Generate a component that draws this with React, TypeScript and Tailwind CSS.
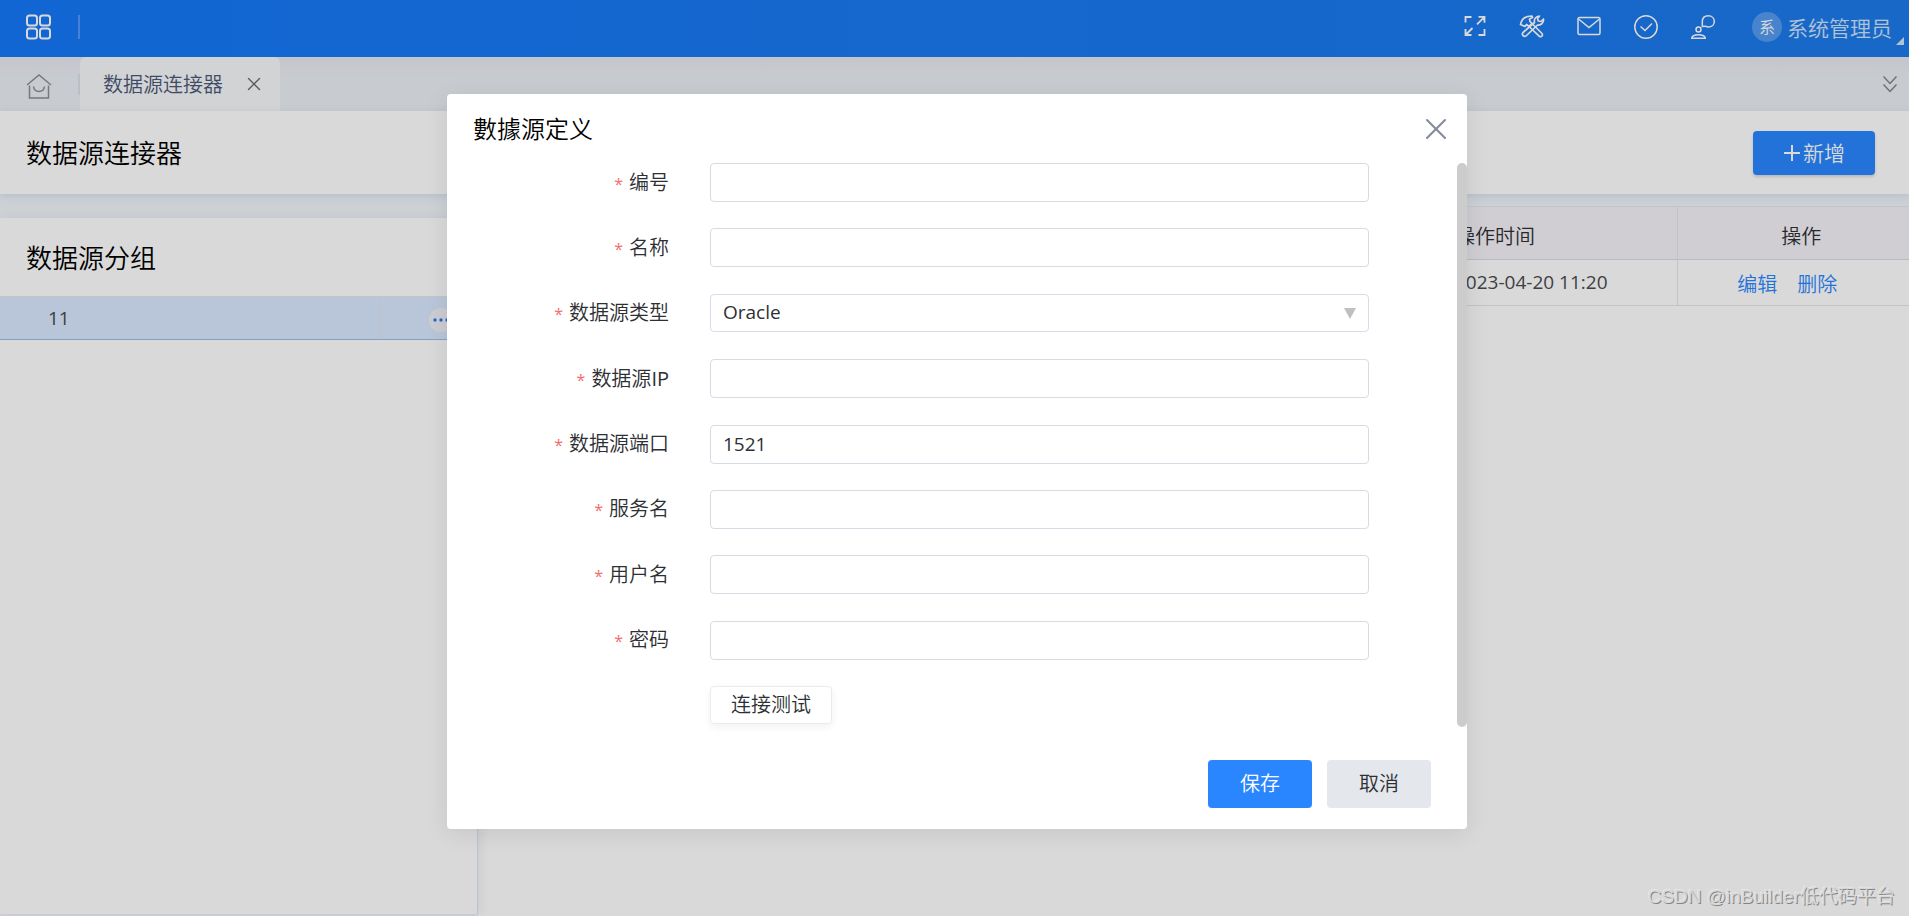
import { useState, type ReactNode } from "react";
import { X } from "lucide-react";

type Field = {
  id: string;
  label: ReactNode;
  value?: string;
  type?: string;
  options?: string[];
};

const fields: Field[] = [
  { id: "code", label: "编号" },
  { id: "name", label: "名称" },
  { id: "kind", label: "数据源类型", value: "Oracle", options: ["Oracle"] },
  { id: "ip", label: <>数据源<span className="font-normal">IP</span></> },
  { id: "port", label: "数据源端口", value: "1521" },
  { id: "service", label: "服务名" },
  { id: "user", label: "用户名" },
  { id: "password", label: "密码", type: "password" },
];

export default function App() {
  return (
    <div className="relative flex min-h-screen flex-col bg-[#f1f6fb] font-['Open_Sans','Noto_Sans_CJK_SC',sans-serif] text-xl font-[350] text-[#2d2f33]">
      <TopBar />
      <TabBar />
      <PageHeader />
      <main className="flex flex-1">
        <GroupPanel />
        <ConnectorTable />
      </main>
      <div className="absolute inset-0 flex items-start justify-center bg-black/15 pt-[94px] pl-[5px]">
        <SourceDialog />
      </div>
      <p className="absolute right-[14px] bottom-1 font-['Liberation_Sans','Noto_Sans_CJK_SC',sans-serif] text-[19px] leading-[30px] text-[#d8d8d8] [text-shadow:1px_1px_0_#858585,-1px_-1px_0_#e6e6e6]">
        CSDN @inBuilder低代码平台
      </p>
    </div>
  );
}

function IconButton({ label, children }: { label: string; children: ReactNode }) {
  return (
    <button type="button" aria-label={label} className="flex h-6 w-6 items-center justify-center">
      {children}
    </button>
  );
}

function TopBar() {
  return (
    <header className="flex h-[57px] items-center bg-linear-to-r from-[#1678f8] to-[#1d7bec] pr-[5px] pb-1 pl-[26px] text-white shadow-[0_2px_16px_rgba(120,80,80,0.15)]">
      <button type="button" aria-label="应用" className="mr-[26px]">
        <svg viewBox="0 0 26 26" className="h-[26px] w-[26px]" fill="none" stroke="currentColor" strokeWidth="2">
          <rect x="1" y="1.500" width="10" height="10" rx="2.500" />
          <rect x="14" y="1.500" width="10" height="10" rx="2.500" />
          <rect x="1" y="14.500" width="10" height="10" rx="2.500" />
          <rect x="14" y="14.500" width="10" height="10" rx="2.500" />
        </svg>
      </button>
      <span className="h-6 w-0.5 bg-white/25" />

      <div className="ml-auto flex items-center gap-[33px]">
        <IconButton label="全屏">
          <svg viewBox="0 0 24 24" className="h-6 w-6" fill="none" stroke="currentColor" strokeWidth="1.800">
            <path d="M2.500 7.500V2h6M15.500 1.800h6v6M21 2.300l-7 7M21.500 14v6h-6M8.500 20h-6v-6M3 19.500l6.500-6.500" />
          </svg>
        </IconButton>
        <IconButton label="工具">
          <svg viewBox="0 0 26 24" className="h-6 w-[26px] shrink-0" fill="none" stroke="currentColor" strokeWidth="1.700" strokeLinejoin="round">
            <path d="M1.500 9.500C2.500 4.500 5.500.8 13 1l.5 1.500-3 1.500.5 2.500 2 2-3 3-2.500-2-1.500 2z" />
            <path d="M10 11.500l3-3 10 10c1.500 2-.8 4-2.800 2.700z" />
            <path d="M4 17.500l11.500-10c-.7-3 1-6.500 5-6.500L18.500 3.500l.8 2.500 2.700.5L24.500 4c.4 4-2.500 6.500-6 6L7 21c-2.500 1-4.700-1.500-3-3.500z" />
          </svg>
        </IconButton>
        <IconButton label="消息">
          <svg viewBox="0 0 24 24" className="h-6 w-6" fill="none" stroke="currentColor" strokeWidth="1.500">
            <rect x="1" y="2.500" width="22" height="17" rx="1.500" />
            <path d="M1.500 4 12 12.500 22.500 4" />
          </svg>
        </IconButton>
        <IconButton label="待办">
          <svg viewBox="0 0 24 24" className="h-6 w-6" fill="none" stroke="currentColor" strokeWidth="1.500">
            <circle cx="12" cy="12" r="11.200" />
            <path d="m6.500 11.500 4.500 4 7-7" />
          </svg>
        </IconButton>
        <IconButton label="咨询">
          <svg viewBox="0 0 24 24" className="h-6 w-6" fill="none" stroke="currentColor" strokeWidth="1.500">
            <path d="M11.300 11.500V6.500C11.500 3 14 .8 17.300.8c3.500 0 6 2.500 6 5.700 0 3.300-2.500 5.500-6 5.500-1.500 0-2.200-.3-3-.8z" />
            <circle cx="7.500" cy="14.500" r="2.500" />
            <path d="M.8 23.200h13.400c-.3-2.400-3.200-3.500-6.700-3.500s-6.400 1.100-6.700 3.500z" />
          </svg>
        </IconButton>
        <button type="button" className="ml-1 flex items-center text-[21px] text-white/80">
          <span className="mr-[5px] flex h-[30px] w-[30px] items-center justify-center rounded-full bg-white/25 text-base text-white">
            系
          </span>
          <span className="pt-0.5 leading-[30px]">系统管理员</span>
          <svg viewBox="0 0 8 8" className="mt-7 ml-1 h-2 w-2" fill="currentColor">
            <path d="M8 0v8H0z" />
          </svg>
        </button>
      </div>
    </header>
  );
}

function TabBar() {
  return (
    <nav className="flex h-[54px] items-center bg-linear-to-b from-[#e8e8f0] to-[#ebf0f5] to-40%">
      <button type="button" aria-label="首页" className="ml-[26px] pt-1">
        <svg viewBox="0 0 26 26" className="h-[26px] w-[26px] text-[#8c8d90]" fill="none" stroke="currentColor" strokeWidth="1.500">
          <path d="M1 12 13 2l12 10M3.500 12.500V25h19V12.500M7.500 13.500c.8 6.500 10.200 6.500 11 0" />
        </svg>
      </button>
      <span className="ml-[26px] h-[21px] w-0.5 bg-[#dcdfea]" />
      <div className="flex h-full w-[200px] items-center rounded-t-md bg-[#f7f8fa] pl-[23px] text-[#4b5878]">
        <a href="#connector" className="pt-0.5">数据源连接器</a>
        <button type="button" aria-label="关闭标签" className="ml-5">
          <X className="h-[22px] w-[22px] text-[#6b6c70]" strokeWidth={1.5} />
        </button>
      </div>
      <button type="button" aria-label="更多标签" className="mr-[11px] ml-auto">
        <svg viewBox="0 0 16 18" className="h-[18px] w-4 text-[#85868a]" fill="none" stroke="currentColor" strokeWidth="1.500">
          <path d="m1.500 1.500 6.500 7 6.500-7M1.500 9.500l6.500 7 6.500-7" />
        </svg>
      </button>
    </nav>
  );
}

function PageHeader() {
  return (
    <div className="flex h-[83px] items-center justify-between bg-white pr-[34px] pl-[26px] shadow-[0_2px_8px_rgba(70,100,160,0.15)]">
      <h1 className="pt-0.5 text-[26px] text-black">数据源连接器</h1>
      <button
        type="button"
        className="flex h-11 w-[122px] items-center justify-center gap-0.5 rounded-sm bg-[#2a86ff] text-[21px] text-white shadow-[0_2px_3px_rgba(0,0,0,0.15)]"
      >
        <svg viewBox="0 0 18 18" className="h-[18px] w-[18px]" fill="none" stroke="currentColor" strokeWidth="2">
          <path d="M9 1v16M1 9h16" />
        </svg>
        <span className="pt-0.5">新增</span>
      </button>
    </div>
  );
}

function GroupPanel() {
  return (
    <section className="relative mt-6 mb-0.5 w-[478px] border-r border-[#dfe4ec] bg-white shadow-[4px_0_8px_rgba(70,100,150,0.08)]">
      <h2 className="flex h-[78px] items-center pt-0.5 pl-[26px] text-[26px] text-black">数据源分组</h2>
      <div className="flex h-11 items-center border-t border-b border-t-[#e6e8ee] border-b-[#9ebcec] bg-[#dae9ff] pl-12">
        <span className="flex-1 text-[19px] font-normal text-[#45484d]">11</span>
        <div className="flex h-full w-[97px] items-center border-l border-[#e2e4ea] pt-1 pl-12">
          <button type="button" aria-label="更多" className="flex h-6 w-6 items-center justify-center rounded-full bg-[#eff1f8]">
            <svg viewBox="0 0 16 4" className="h-1 w-4 text-[#2a7cf5]" fill="currentColor">
              <circle cx="2" cy="2" r="1.700" />
              <circle cx="8" cy="2" r="1.700" />
              <circle cx="14" cy="2" r="1.700" />
            </svg>
          </button>
        </div>
      </div>
    </section>
  );
}

function ConnectorTable() {
  return (
    <section className="mt-3 flex-1 bg-white">
      <table className="w-full table-fixed border-collapse text-left">
        <thead>
          <tr className="h-[53px] border-t border-b border-t-[#e4e8ee] border-b-[#dadce6] bg-[#f5f2f8]">
            <td />
            <th scope="col" className="w-[238px] pt-2 pl-4 font-[350]">操作时间</th>
            <th scope="col" className="w-[232px] border-l border-[#e4e6ec] pt-2 pl-4 text-center font-[350]">操作</th>
          </tr>
        </thead>
        <tbody>
          <tr className="h-[46px] border-b border-[#e4e6ea]">
            <td />
            <td className="pl-4 text-[19px] font-normal text-[#4a4c50]">2023-04-20 11:20</td>
            <td className="border-l border-[#e4e6ec] pt-1 pr-3 text-center text-[#2a86ff]">
              <a href="#edit" className="mr-5">编辑</a>
              <a href="#delete">删除</a>
            </td>
          </tr>
        </tbody>
      </table>
    </section>
  );
}

function SourceDialog() {
  const [values, setValues] = useState<Record<string, string>>(
    Object.fromEntries(fields.map((f) => [f.id, f.value ?? ""])),
  );

  function update(id: string, value: string) {
    setValues((prev) => ({ ...prev, [id]: value }));
  }

  return (
    <div
      role="dialog"
      aria-labelledby="dialog-title"
      className="w-full max-w-[1020px] rounded-sm bg-white pb-[21px] shadow-[0_4px_24px_rgba(0,0,0,0.09)]"
    >
      <div className="flex h-[69px] items-center justify-between pr-[13px] pl-[26px]">
        <h2 id="dialog-title" className="text-2xl text-black">數據源定义</h2>
        <button type="button" aria-label="关闭">
          <X className="h-9 w-9 text-[#878c9b]" strokeWidth={1.4} />
        </button>
      </div>

      <form className="flex" onSubmit={(e) => e.preventDefault()}>
        <div className="flex h-[561px] flex-1 flex-col justify-between pr-[88px]">
          {fields.map((f) => (
            <div key={f.id} className="grid h-[39px] grid-cols-[222px_1fr] gap-x-[41px]">
              <label htmlFor={f.id} className="self-center text-right">
                <span className="mr-1.5 text-base font-normal text-[#f56c6c]">*</span>
                {f.label}
              </label>
              {f.options ? (
                <div className="relative">
                  <select
                    id={f.id}
                    value={values[f.id]}
                    onChange={(e) => update(f.id, e.target.value)}
                    className="block h-[38px] w-full appearance-none rounded-sm border border-[#d8dbe8] bg-white px-3 text-[19px] font-normal"
                  >
                    {f.options.map((o) => (
                      <option key={o}>{o}</option>
                    ))}
                  </select>
                  <svg viewBox="0 0 12 11" className="pointer-events-none absolute top-3.5 right-[13px] h-[11px] w-3 text-[#bfbfbf]" fill="currentColor">
                    <path d="M0 0h12L6 11z" />
                  </svg>
                </div>
              ) : (
                <input
                  id={f.id}
                  type={f.type ?? "text"}
                  value={values[f.id]}
                  onChange={(e) => update(f.id, e.target.value)}
                  className="h-[39px] w-full rounded-sm border border-[#d8dbe4] px-3 text-[19px] font-normal"
                />
              )}
            </div>
          ))}
          <button
            type="button"
            className="ml-[263px] h-[38px] w-[122px] rounded-sm border border-[#eaeaf3] shadow-[0_3px_8px_rgba(0,0,0,0.06)]"
          >
            连接测试
          </button>
        </div>
        <div className="h-[564px] w-2.5 rounded-full bg-[#ccc]" />
      </form>

      <div className="mt-[33px] flex justify-end gap-[15px] pr-9">
        <button type="button" className="h-12 w-[104px] rounded-sm bg-[#2a86ff] text-white">
          保存
        </button>
        <button type="button" className="h-12 w-[104px] rounded-sm bg-[#e4e7eb]">
          取消
        </button>
      </div>
    </div>
  );
}
